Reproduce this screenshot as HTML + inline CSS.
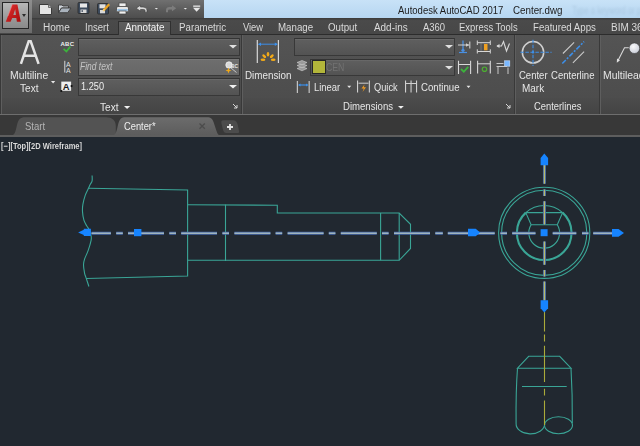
<!DOCTYPE html>
<html><head><meta charset="utf-8">
<style>
html,body{margin:0;padding:0}
body{width:640px;height:446px;overflow:hidden;position:relative;background:#212830;font-family:"Liberation Sans",sans-serif}
.a{position:absolute;box-sizing:border-box}
.t{position:absolute;white-space:nowrap;line-height:1;transform-origin:0 0}
svg{position:absolute;overflow:visible}
</style></head><body>
<div class="a" style="left:0px;top:0px;width:204px;height:19px;background:linear-gradient(#707070,#5a5a5a 55%,#4c4c4c)"></div>
<div class="a" style="left:204px;top:0px;width:436px;height:18px;background:linear-gradient(#c8e2f7,#b6d6f1)"></div>
<div class="t" style="left:398.40px;top:5.03px;font-size:11.5px;color:#1c1c1c;font-weight:normal;font-style:normal;transform:scaleX(0.8281);">Autodesk AutoCAD 2017</div>
<div class="t" style="left:513.21px;top:5.03px;font-size:11.5px;color:#1c1c1c;font-weight:normal;font-style:normal;transform:scaleX(0.8502);">Center.dwg</div>
<div class="t" style="left:571.85px;top:6.00px;font-size:10px;color:rgba(70,100,130,0.16);font-weight:normal;font-style:normal;transform:scaleX(0.7689);filter:blur(1.2px)">Type a keyword or phrase</div>
<div class="a" style="left:0px;top:18px;width:640px;height:17px;background:linear-gradient(#3a3a3a,#4a4a4a 15%,#474747)"></div>
<div class="a" style="left:0px;top:34px;width:640px;height:1px;background:#2c2c2c"></div>
<div class="a" style="left:0px;top:0px;width:32px;height:33px;background:linear-gradient(#8e8e8e,#6c6c6c)"></div>
<div class="a" style="left:2px;top:2px;width:27px;height:27px;border:1px solid #262626;background:linear-gradient(#b8b8b8,#9a9a9a 60%,#8a8a8a)"></div>
<svg style="left:0;top:0" width="40" height="40" viewBox="0 0 40 40">
<defs><linearGradient id="ag" x1="0" y1="0" x2="1" y2="1"><stop offset="0" stop-color="#e03030"/><stop offset="1" stop-color="#a80c0c"/></linearGradient></defs>
<path d="M5.8 21.8 L12.3 4.6 H17.4 L20.8 21.8 H16.9 L16.3 18 H12.2 L10.6 21.8 Z M13.3 15 H15.9 L15.2 9.3 Z" fill="url(#ag)" fill-rule="evenodd"/>
<path d="M12.3 4.6 L8 16" stroke="#ff8a8a" stroke-width="0.8" opacity="0.7"/>
</svg>
<div class="a" style="left:22.0px;top:14px;width:0;height:0;border-left:2.5px solid transparent;border-right:2.5px solid transparent;border-top:3px solid #2a2a2a"></div>
<div class="a" style="left:117.5px;top:20.5px;width:53.5px;height:15px;background:linear-gradient(#5e5e5e,#555);border:1px solid #303030;border-bottom:none"></div>
<div class="t" style="left:42.95px;top:23.00px;font-size:10px;color:#dadada;font-weight:normal;font-style:normal;transform:scaleX(1.0020);">Home</div>
<div class="t" style="left:85.14px;top:23.00px;font-size:10px;color:#dadada;font-weight:normal;font-style:normal;transform:scaleX(0.9544);">Insert</div>
<div class="t" style="left:179.22px;top:23.00px;font-size:10px;color:#dadada;font-weight:normal;font-style:normal;transform:scaleX(0.9725);">Parametric</div>
<div class="t" style="left:242.50px;top:23.00px;font-size:10px;color:#dadada;font-weight:normal;font-style:normal;transform:scaleX(0.9302);">View</div>
<div class="t" style="left:277.72px;top:23.00px;font-size:10px;color:#dadada;font-weight:normal;font-style:normal;transform:scaleX(0.9728);">Manage</div>
<div class="t" style="left:328.31px;top:23.00px;font-size:10px;color:#dadada;font-weight:normal;font-style:normal;transform:scaleX(0.9729);">Output</div>
<div class="t" style="left:373.75px;top:23.00px;font-size:10px;color:#dadada;font-weight:normal;font-style:normal;transform:scaleX(0.9911);">Add-ins</div>
<div class="t" style="left:422.50px;top:23.00px;font-size:10px;color:#dadada;font-weight:normal;font-style:normal;transform:scaleX(0.9457);">A360</div>
<div class="t" style="left:458.74px;top:23.00px;font-size:10px;color:#dadada;font-weight:normal;font-style:normal;transform:scaleX(0.9442);">Express Tools</div>
<div class="t" style="left:532.98px;top:23.00px;font-size:10px;color:#dadada;font-weight:normal;font-style:normal;transform:scaleX(0.9664);">Featured Apps</div>
<div class="t" style="left:125.00px;top:23.00px;font-size:10px;color:#f4f4f4;font-weight:normal;font-style:normal;transform:scaleX(0.9848);">Annotate</div>
<div class="t" style="left:611.20px;top:23.00px;font-size:10px;color:#dadada;font-weight:normal;font-style:normal;transform:scaleX(0.9972);">BIM 360</div>
<div class="a" style="left:0px;top:35px;width:640px;height:63px;background:linear-gradient(#545454,#4d4d4d)"></div>
<div class="a" style="left:0px;top:98px;width:640px;height:16px;background:linear-gradient(#4c4c4c,#444)"></div>
<div class="a" style="left:0px;top:114px;width:640px;height:1px;background:#6e6e6e"></div>
<div class="a" style="left:0px;top:35px;width:1px;height:79px;background:#393939"></div>
<div class="a" style="left:1px;top:35px;width:1px;height:79px;background:#5e5e5e"></div>
<div class="a" style="left:241px;top:35px;width:1px;height:79px;background:#393939"></div>
<div class="a" style="left:242px;top:35px;width:1px;height:79px;background:#5e5e5e"></div>
<div class="a" style="left:514px;top:35px;width:1px;height:79px;background:#393939"></div>
<div class="a" style="left:515px;top:35px;width:1px;height:79px;background:#5e5e5e"></div>
<div class="a" style="left:599px;top:35px;width:1px;height:79px;background:#393939"></div>
<div class="a" style="left:600px;top:35px;width:1px;height:79px;background:#5e5e5e"></div>
<svg style="left:0;top:0" width="640" height="120" viewBox="0 0 640 120">
<!-- new -->
<path d="M39.5 4.5 H48.5 L51.5 7.5 V14.5 H39.5 Z" fill="#e4e4e4" stroke="#3a3a3a" stroke-width="1"/>
<path d="M48.5 4.5 V7.5 H51.5" fill="#bdbdbd" stroke="#555" stroke-width="0.8"/>
<!-- open -->
<path d="M58.5 5 H62 L63 6 H68.5 V8 H61.5 L58.5 12.5 Z" fill="#cfd4da" stroke="#3a3a3a" stroke-width="0.9"/>
<path d="M58.5 12.7 L61.5 8 H71 L67.7 12.7 Z" fill="#a9b2bc" stroke="#3a3a3a" stroke-width="0.9"/>
<!-- save -->
<rect x="78" y="2.5" width="11" height="11" rx="1" fill="#3c4a5c" stroke="#2a2a2a" stroke-width="0.8"/>
<rect x="80" y="3.5" width="7" height="4" fill="#e8e8e8"/>
<rect x="80.5" y="9.5" width="6" height="3.5" fill="#d8d8d8"/>
<rect x="81.5" y="10.3" width="1.5" height="1.5" fill="#3c4a5c"/>
<!-- save as -->
<rect x="97.5" y="3.5" width="11" height="10.5" rx="1" fill="#3c4a5c" stroke="#2a2a2a" stroke-width="0.8"/>
<rect x="99.5" y="4.3" width="6" height="4" fill="#e0e0e0"/>
<rect x="100" y="10" width="5" height="3.3" fill="#d8d8d8"/>
<path d="M103.5 10.5 L109.2 4.2" stroke="#e8a020" stroke-width="2.4"/>
<path d="M103 11 L104.5 9.3" stroke="#f0d080" stroke-width="1.6"/>
<!-- print -->
<rect x="119" y="3" width="7" height="4" fill="#eeeeee" stroke="#444" stroke-width="0.7"/>
<rect x="116.5" y="6.5" width="12" height="5.5" rx="1.5" fill="#e6e6e6" stroke="#444" stroke-width="0.8"/>
<rect x="117.3" y="9" width="10.5" height="2" fill="#9cc4e6"/>
<rect x="119" y="11" width="7" height="3" fill="#f0f0f0" stroke="#444" stroke-width="0.7"/>
<!-- undo -->
<path d="M136.2 8.2 L140.5 5.2 V7 H143 Q147 7 147 10.2 V12.2 H145 V10.5 Q145 9.5 143.5 9.5 H140.5 V11.2 Z" fill="#d8d8d8" stroke="#3a3a3a" stroke-width="0.6"/>
<path d="M154.7 8 H158 L156.35 9.6 Z" fill="#e8e8e8"/>
<!-- redo -->
<path d="M176.2 8.2 L172 5.2 V7 H169.5 Q166 7 166 10.2 V12.2 H168 V10.5 Q168 9.5 169.5 9.5 H172 V11.2 Z" fill="#7c7c7c"/>
<path d="M183.7 8 H187 L185.35 9.6 Z" fill="#e8e8e8"/>
<!-- customize -->
<rect x="193.2" y="5.5" width="7" height="1.3" fill="#e8e8e8"/>
<path d="M193 7.8 H200.3 L196.65 11.8 Z" fill="#e8e8e8"/>
</svg>
<svg style="left:0;top:0" width="60" height="70" viewBox="0 0 60 70">
<path d="M20.9 63.8 L28.7 41.3 H30.7 L38.6 63.8 M24 55.8 H35.4" fill="none" stroke="#e4e4e4" stroke-width="2.5" stroke-linejoin="miter"/>
</svg>
<div class="t" style="left:10.42px;top:71.16px;font-size:10.4px;color:#e6e6e6;font-weight:normal;font-style:normal;transform:scaleX(1.0022);">Multiline</div>
<div class="t" style="left:20.40px;top:84.06px;font-size:10.4px;color:#e6e6e6;font-weight:normal;font-style:normal;transform:scaleX(0.9722);">Text</div>
<svg style="left:0;top:0" width="640" height="120" viewBox="0 0 640 120"><path d="M51 81 H55.2 L53.1 83.6 Z" fill="#e8e8e8"/></svg>
<div class="a" style="left:78px;top:38px;width:162px;height:18px;border:1px solid #383838;border-top-color:#343434;background:linear-gradient(#5f5f5f,#535353);box-shadow:inset 0 1px 0 rgba(255,255,255,0.06)"></div>
<div class="a" style="left:78px;top:58px;width:162px;height:18px;border:1px solid #383838;border-top-color:#343434;background:linear-gradient(#6e6e6e,#676767);box-shadow:inset 0 1px 0 rgba(255,255,255,0.06)"></div>
<div class="a" style="left:78px;top:78px;width:162px;height:18px;border:1px solid #383838;border-top-color:#343434;background:linear-gradient(#5f5f5f,#535353);box-shadow:inset 0 1px 0 rgba(255,255,255,0.06)"></div>
<div class="t" style="left:80.45px;top:62.26px;font-size:10.4px;color:#c4c4c4;font-weight:normal;font-style:italic;transform:scaleX(0.8138);">Find text</div>
<div class="t" style="left:81.11px;top:82.46px;font-size:10.4px;color:#f0f0f0;font-weight:normal;font-style:normal;transform:scaleX(0.8851);">1.250</div>
<svg style="left:0;top:0" width="640" height="120" viewBox="0 0 640 120">
<path d="M229 45 H237 L233 48.5 Z" fill="#e0e0e0"/>
<path d="M229 85 H237 L233 88.5 Z" fill="#f0f0f0"/>
<!-- abc check -->
<text x="60.5" y="45.6" font-family="Liberation Sans" font-weight="bold" font-size="6" fill="#f0f0f0" textLength="13.5" lengthAdjust="spacing">ABC</text>
<path d="M63.6 48.8 L66.4 51.5 L70.3 46.6" fill="none" stroke="#3bb43b" stroke-width="1.7"/>
<!-- find icon -->
<rect x="64.3" y="60.8" width="1" height="11.7" fill="#d8d8d8"/>
<text x="66" y="66.6" font-family="Liberation Sans" font-size="7" fill="#e0e0e0" textLength="4.6" lengthAdjust="spacingAndGlyphs">A</text>
<text x="66" y="72.8" font-family="Liberation Sans" font-size="7" fill="#e0e0e0" textLength="4.6" lengthAdjust="spacingAndGlyphs">A</text>
<!-- text height -->
<rect x="61.3" y="81.6" width="9.8" height="9.2" fill="#efefef"/>
<text x="62.8" y="89.8" font-family="Liberation Sans" font-weight="bold" font-size="9" fill="#1a1a1a" textLength="6.8" lengthAdjust="spacingAndGlyphs">A</text>
<circle cx="61.3" cy="91" r="1.1" fill="#111"/>
<circle cx="71.6" cy="86.1" r="1.1" fill="#111"/>
<!-- find button -->
<circle cx="229" cy="65" r="3.2" fill="#d8d8d8" stroke="#f4f4f4" stroke-width="0.8"/>
<text x="231" y="68" font-family="Liberation Sans" font-weight="bold" font-size="6" fill="#e8e8e8" textLength="7" lengthAdjust="spacingAndGlyphs">BC</text>
<path d="M231 68 L236.5 72.5" stroke="#c8c8c8" stroke-width="1"/>
<path d="M228.5 67.5 L229.3 69.7 L231.5 70.5 L229.3 71.3 L228.5 73.5 L227.7 71.3 L225.5 70.5 L227.7 69.7 Z" fill="#f0a818"/>
<!-- footer Text arrow + launcher -->
<path d="M124 106 H130.2 L127.1 109 Z" fill="#f0f0f0"/>
<path d="M233 104 L237 108 M237 105 V108 H234" stroke="#d8d8d8" stroke-width="1" fill="none"/>
</svg>
<div class="t" style="left:100.00px;top:102.66px;font-size:10.4px;color:#e6e6e6;font-weight:normal;font-style:normal;transform:scaleX(0.9722);">Text</div>
<div class="t" style="left:244.96px;top:70.96px;font-size:10.4px;color:#e6e6e6;font-weight:normal;font-style:normal;transform:scaleX(0.9469);">Dimension</div>
<div class="a" style="left:294px;top:38px;width:161px;height:18px;border:1px solid #383838;border-top-color:#343434;background:linear-gradient(#5f5f5f,#535353);box-shadow:inset 0 1px 0 rgba(255,255,255,0.06)"></div>
<div class="a" style="left:310px;top:59px;width:145px;height:17px;border:1px solid #383838;border-top-color:#343434;background:linear-gradient(#5f5f5f,#535353);box-shadow:inset 0 1px 0 rgba(255,255,255,0.06)"></div>
<div class="a" style="left:312px;top:60px;width:14px;height:14px;background:#b3b63a;border:1px solid #262626"></div>
<div class="t" style="left:326.26px;top:63.16px;font-size:10.4px;color:#727272;font-weight:normal;font-style:normal;transform:scaleX(0.8380);">CEN</div>
<div class="t" style="left:314.05px;top:82.66px;font-size:10.4px;color:#e6e6e6;font-weight:normal;font-style:normal;transform:scaleX(0.9060);">Linear</div>
<div class="t" style="left:373.58px;top:82.66px;font-size:10.4px;color:#e6e6e6;font-weight:normal;font-style:normal;transform:scaleX(0.8908);">Quick</div>
<div class="t" style="left:420.82px;top:82.66px;font-size:10.4px;color:#e6e6e6;font-weight:normal;font-style:normal;transform:scaleX(0.9271);">Continue</div>
<div class="t" style="left:342.73px;top:102.46px;font-size:10.4px;color:#e6e6e6;font-weight:normal;font-style:normal;transform:scaleX(0.9220);">Dimensions</div>
<svg style="left:0;top:0" width="640" height="120" viewBox="0 0 640 120">
<path d="M445 45 H453 L449 48.5 Z" fill="#e0e0e0"/>
<path d="M445 66 H453 L449 69.5 Z" fill="#e0e0e0"/>
<path d="M347.2 85.8 H351.2 L349.2 88 Z" fill="#e8e8e8"/>
<path d="M466.5 85.8 H470.5 L468.5 88 Z" fill="#e8e8e8"/>
<path d="M398 106 H403.8 L400.9 108.8 Z" fill="#f0f0f0"/>
<path d="M506 104 L510 108 M510 105 V108 H507" stroke="#d8d8d8" stroke-width="1" fill="none"/>
<!-- Dimension big icon -->
<rect x="256.7" y="40" width="1.2" height="23" fill="#d8d8d8"/>
<rect x="277.8" y="40" width="1.2" height="23" fill="#d8d8d8"/>
<path d="M258.5 44.2 H277.2" stroke="#3d8fe8" stroke-width="1"/>
<path d="M258 44.2 L261 42.5 V46 Z M277.8 44.2 L274.8 42.5 V46 Z" fill="#3d8fe8"/>
<g fill="#f2aa18">
<ellipse cx="268" cy="54.3" rx="1.3" ry="2.3"/>
<ellipse cx="264.2" cy="56.2" rx="1.3" ry="2.3" transform="rotate(-50 264.2 56.2)"/>
<ellipse cx="271.8" cy="56.2" rx="1.3" ry="2.3" transform="rotate(50 271.8 56.2)"/>
<ellipse cx="263" cy="59.8" rx="2.4" ry="1.3"/>
<ellipse cx="273.2" cy="59.8" rx="2.4" ry="1.3"/>
</g>
<!-- layer stack icon -->
<g fill="#9a9a9a" stroke="#cfcfcf" stroke-width="0.6">
<path d="M297 68.5 L302 66.5 L307 68.5 L302 70.8 Z"/>
<path d="M297 65.5 L302 63.5 L307 65.5 L302 67.8 Z"/>
<path d="M297 62.5 L302 60.5 L307 62.5 L302 64.8 Z"/>
</g>
<!-- linear icon -->
<rect x="296.8" y="81" width="1.1" height="12" fill="#d0d0d0"/>
<rect x="308.6" y="81" width="1.1" height="12" fill="#d0d0d0"/>
<path d="M299 85 H307.5" stroke="#3d8fe8" stroke-width="1.2"/>
<path d="M298 85 L300.5 83.5 V86.5 Z M308.5 85 L306 83.5 V86.5 Z" fill="#3d8fe8"/>
<!-- quick icon -->
<rect x="357" y="80.5" width="1.1" height="12" fill="#d0d0d0"/>
<rect x="368.8" y="80.5" width="1.1" height="12" fill="#d0d0d0"/>
<path d="M358.5 83.2 H368.5" stroke="#d0d0d0" stroke-width="1"/>
<path d="M364.5 84.5 L361.5 88.5 H363.8 L362.5 92 L366 87.2 H363.8 Z" fill="#f09a20"/>
<!-- continue icon -->
<g fill="#d0d0d0">
<rect x="405" y="80.5" width="1.1" height="12"/>
<rect x="410.5" y="80.5" width="1.1" height="12"/>
<rect x="416" y="80.5" width="1.1" height="12"/>
</g>
<path d="M406 83.5 H416.5" stroke="#d0d0d0" stroke-width="1"/>
<!-- grid icons -->
<path d="M463 40.5 V50" stroke="#4a90e2" stroke-width="1.3"/>
<path d="M459 52.5 H467" stroke="#4a90e2" stroke-width="1.2"/>
<circle cx="463" cy="50.3" r="1.6" fill="#4a90e2"/>
<path d="M458 45 H469" stroke="#d0d0d0" stroke-width="1"/>
<path d="M469.8 41.5 V48.5" stroke="#d0d0d0" stroke-width="1.1"/>
<path d="M469 45 L466 43.3 V46.7 Z" fill="#d0d0d0"/>
<path d="M477.5 42.7 H490" stroke="#d8d8d8" stroke-width="1"/>
<path d="M477.5 51.5 H490" stroke="#d8d8d8" stroke-width="1"/>
<path d="M477.3 40.5 V45 M490.3 40.5 V45 M477.3 49.3 V53.5 M490.3 49.3 V53.5" stroke="#d8d8d8" stroke-width="1"/>
<path d="M481 43.5 V50.5" stroke="#a8a8a8" stroke-width="0.8" stroke-dasharray="1,1"/>
<rect x="484" y="44" width="3.5" height="6.3" fill="#f0a020"/>
<path d="M497 46 L501.5 46 L503.5 41.5 L506.5 51 L509.5 43.5" stroke="#d8d8d8" stroke-width="1.1" fill="none"/>
<path d="M496.3 46 L499.5 44 V48 Z" fill="#d8d8d8"/>
<path d="M458.5 60.8 V74 M470.6 60.8 V74" stroke="#d8d8d8" stroke-width="1.1"/>
<path d="M459 64.5 H470" stroke="#d8d8d8" stroke-width="1"/>
<path d="M461 69 L463.8 71.8 L468.2 66.8" stroke="#3cb43c" stroke-width="1.8" fill="none"/>
<path d="M477.6 60.8 V73.5 M490.3 60.8 V73.5" stroke="#d8d8d8" stroke-width="1.1"/>
<path d="M478 63.8 H490" stroke="#d8d8d8" stroke-width="1"/>
<circle cx="484.5" cy="69.2" r="2.2" fill="none" stroke="#4caf30" stroke-width="1.2"/>
<rect x="504.6" y="60.8" width="5.2" height="5.4" fill="#7ab8ff" stroke="#c8e0ff" stroke-width="0.6"/>
<path d="M496.5 63.5 H503.5 M496.5 66.5 H507 M498 66.5 V74 M508 67.5 V74" stroke="#c8c8c8" stroke-width="1" fill="none"/>
<!-- Center mark -->
<circle cx="533" cy="52.3" r="10.7" fill="none" stroke="#d0d0d0" stroke-width="1.5"/>
<path d="M520.4 52.3 H551.6 M533 39.8 V66" stroke="#3d8fe8" stroke-width="1.1" stroke-dasharray="3.5,1.5"/>
<circle cx="533" cy="52.3" r="1.2" fill="#3d8fe8"/>
<!-- Centerline icon -->
<path d="M562.9 53.5 L574.1 42.3 M572.9 62.9 L584.1 51.6" stroke="#c8c8c8" stroke-width="1.1"/>
<path d="M562.3 63.5 L584.1 41.6" stroke="#3d8fe8" stroke-width="1.6" stroke-dasharray="5,1.5,2,1.5"/>
<!-- Multileader -->
<path d="M617.5 61.5 L624.5 47.8 H629.5" stroke="#d8d8d8" stroke-width="1.1" fill="none"/>
<path d="M616.8 62.8 L617 58.5 L620 60.3 Z" fill="#e0e0e0"/>
<defs><radialGradient id="bg1" cx="0.4" cy="0.35" r="0.7"><stop offset="0" stop-color="#fafafa"/><stop offset="1" stop-color="#c8ccd8"/></radialGradient></defs><circle cx="634.4" cy="48.2" r="5.3" fill="url(#bg1)" stroke="#3a3a3a" stroke-width="0.6"/>
</svg>
<div class="t" style="left:518.52px;top:71.16px;font-size:10.4px;color:#e6e6e6;font-weight:normal;font-style:normal;transform:scaleX(0.9158);">Center</div>
<div class="t" style="left:521.80px;top:84.06px;font-size:10.4px;color:#e6e6e6;font-weight:normal;font-style:normal;transform:scaleX(0.9593);">Mark</div>
<div class="t" style="left:551.22px;top:71.16px;font-size:10.4px;color:#e6e6e6;font-weight:normal;font-style:normal;transform:scaleX(0.9174);">Centerline</div>
<div class="t" style="left:533.93px;top:102.46px;font-size:10.4px;color:#e6e6e6;font-weight:normal;font-style:normal;transform:scaleX(0.9007);">Centerlines</div>
<div class="t" style="left:603.17px;top:71.16px;font-size:10.4px;color:#e6e6e6;font-weight:normal;font-style:normal;transform:scaleX(1.0016);">Multileader</div>
<div class="a" style="left:0px;top:115px;width:640px;height:22px;background:#383838"></div>
<svg style="left:0;top:0" width="640" height="446" viewBox="0 0 640 446">
<path d="M11 135.5 C15 135.5 15.5 131 17 125 C18.5 119 20 117.2 25 117.2 H106 C112 117.2 115.8 120.5 115.8 126 V135.5 Z" fill="#535353"/>
<path d="M112 135.5 C116 135.5 116.5 131 118 125 C119.5 119 121 117.3 126 117.3 H207 C211 117.3 212.5 119 213.5 122 L216.5 131 C217.5 134 218.5 135.5 221 135.5 Z" fill="url(#ctg)"/>
<defs><linearGradient id="ctg" x1="0" y1="0" x2="0" y2="1"><stop offset="0" stop-color="#6c6c6c"/><stop offset="1" stop-color="#5c5c5c"/></linearGradient></defs>
<path d="M223.5 120.2 H233 C236 120.2 237 122 237.8 125 L239 131 C239.3 133 238.5 133 237 133 H227 C224 133 223.5 131.5 222.8 129 L221.5 123.5 C221 121 221.5 120.2 223.5 120.2 Z" fill="#4c4c4c"/>
<path d="M227 127 H233 M230 124 V130" stroke="#e4e4e4" stroke-width="1.8"/>
<path d="M199.5 123.5 L204.8 128.8 M204.8 123.5 L199.5 128.8" stroke="#4c4c4c" stroke-width="1.3"/>
</svg>
<div class="a" style="left:0px;top:135px;width:640px;height:2px;background:#5e5e5e"></div>
<div class="t" style="left:24.87px;top:122.16px;font-size:10.4px;color:#b4b4b4;font-weight:normal;font-style:normal;transform:scaleX(0.9173);">Start</div>
<div class="t" style="left:124.33px;top:122.16px;font-size:10.4px;color:#f0f0f0;font-weight:normal;font-style:normal;transform:scaleX(0.8965);">Center*</div>
<div class="t" style="left:1.29px;top:141.85px;font-size:9px;color:#d8d8d8;font-weight:bold;font-style:normal;transform:scaleX(0.8352);">[−][Top][2D Wireframe]</div>
<svg style="left:0;top:0" width="640" height="446" viewBox="0 0 640 446">
<g fill="none" stroke="#3aa596" stroke-width="1.1">
<!-- break line -->
<path d="M92.1 175.5 C92.10 176.38 92.40 179.33 92.1 180.8 C91.80 182.27 90.88 183.10 90.3 184.3 C89.72 185.50 89.43 186.20 88.6 188 C87.77 189.80 86.25 192.37 85.3 195.1 C84.35 197.83 83.37 201.65 82.9 204.4 C82.43 207.15 82.33 208.97 82.5 211.6 C82.67 214.23 83.18 217.80 83.9 220.2 C84.62 222.60 85.85 224.32 86.8 226 C87.75 227.68 88.88 228.63 89.6 230.3 C90.32 231.97 90.85 234.33 91.1 236 C91.35 237.67 91.58 237.90 91.1 240.3 C90.62 242.70 89.28 247.28 88.2 250.4 C87.12 253.52 85.38 256.62 84.6 259 C83.82 261.38 83.50 262.32 83.5 264.7 C83.50 267.08 84.18 271.15 84.6 273.3 C85.02 275.45 85.28 275.40 86 277.6 C86.72 279.80 88.42 285.02 88.9 286.5"/>
<!-- left big body -->
<path d="M88.5 188.3 L187.6 190 V276 L86 278.5"/>
<!-- middle -->
<path d="M187.5 204.8 L277.3 205.2 V213 H399.2 L410.5 224.3 V248.5 L399.2 260.3 H187.5"/>
<path d="M225.5 204.6 V261"/>
<path d="M380.6 213 V260.3"/>
<path d="M399.2 213 V260.3"/>
<!-- end view -->
<circle cx="544.2" cy="232.8" r="45.6"/>
<circle cx="544.2" cy="232.8" r="42.6"/>
<path d="M525.8 212.6 A27.3 27.3 0 0 1 562.6 212.6"/>
<path d="M525.8 212.6 A27.3 27.3 0 1 0 562.6 212.6" stroke-width="2.1"/>
<path d="M525.8 212.6 H562.6 M525.8 212.6 L531.1 224.7 H557.3 L562.6 212.6"/>
<path d="M531.1 224.7 A15.4 15.4 0 1 0 557.3 224.7"/>
<!-- bottom view -->
<path d="M528.7 356.3 H559.7 L571 368.2 H517.5 Z"/>
<path d="M517.5 368.2 C516.2 385 515.9 405 516.1 423.5 A14.3 10 0 0 0 544.7 424.3"/>
<path d="M571 368.2 C572 385 572.5 405 572.3 423"/>
<ellipse cx="558.5" cy="425.3" rx="14" ry="8.5"/>
<path d="M522 386.5 H566.7"/>
</g>
</svg>
<svg style="left:0;top:0" width="640" height="446" viewBox="0 0 640 446">
<path d="M91.5 233.2 H110.9 M116.2 233.2 H122.8 M128 233.2 H164 M169.3 233.2 H176 M181.2 233.2 H217 M222.4 233.2 H229 M234.4 233.2 H270.4 M275.6 233.2 H282.2 M287.6 233.2 H323.6 M328.8 233.2 H335.4 M340.8 233.2 H376.8 M382 233.2 H388.6 M394 233.2 H430 M435.3 233.2 H442.8 M447.8 233.2 H494.7 M500.4 233.2 H507 M512.2 233.2 H535.5 M552.7 233.2 H576.3 M582 233.2 H588.5 M593.2 233.2 H612" stroke="#4568ac" stroke-width="3"/>
<path d="M91.5 233.2 H110.9 M116.2 233.2 H122.8 M128 233.2 H164 M169.3 233.2 H176 M181.2 233.2 H217 M222.4 233.2 H229 M234.4 233.2 H270.4 M275.6 233.2 H282.2 M287.6 233.2 H323.6 M328.8 233.2 H335.4 M340.8 233.2 H376.8 M382 233.2 H388.6 M394 233.2 H430 M435.3 233.2 H442.8 M447.8 233.2 H494.7 M500.4 233.2 H507 M512.2 233.2 H535.5 M552.7 233.2 H576.3 M582 233.2 H588.5 M593.2 233.2 H612" stroke="#9fb4bc" stroke-width="1.4"/>
<path d="M544.45 165 V183.7 M544.45 189.4 V196 M544.45 201.2 V224.5 M544.45 241.5 V264.8 M544.45 270 V276.6 M544.45 281.5 V300.5" stroke="#4568ac" stroke-width="3"/>
<path d="M544.45 165 V183.7 M544.45 189.4 V196 M544.45 201.2 V224.5 M544.45 241.5 V264.8 M544.45 270 V276.6 M544.45 281.5 V300.5" stroke="#b8bc68" stroke-width="1.3"/>
<path d="M544.5 312 V331.4 M544.5 334.4 V341.5 M544.5 345.7 V382 M544.5 388.7 V395.5 M544.5 400.5 V425" stroke="#aaaa3a" stroke-width="1.1"/>
<g fill="#1684ff">
<path d="M78.1 232.5 L83.8 229.8 V228.8 H90.9 V235.9 H83.8 V235 Z"/>
<rect x="134" y="229" width="7.4" height="7.2"/>
<path d="M468 228.7 H475.7 L480.2 232.6 L475.7 236.2 H468 Z"/>
<rect x="540.6" y="229.2" width="7" height="7"/>
<path d="M612 229 H618.5 L624 233 L618.5 236.8 H612 Z"/>
<path d="M544.3 153.4 L548.1 157.9 V165.2 H540.6 V157.9 Z"/>
<path d="M540.6 300.3 H548.1 V308.2 L544.3 312.5 L540.6 308.2 Z"/>
</g>
</svg>
</body></html>
